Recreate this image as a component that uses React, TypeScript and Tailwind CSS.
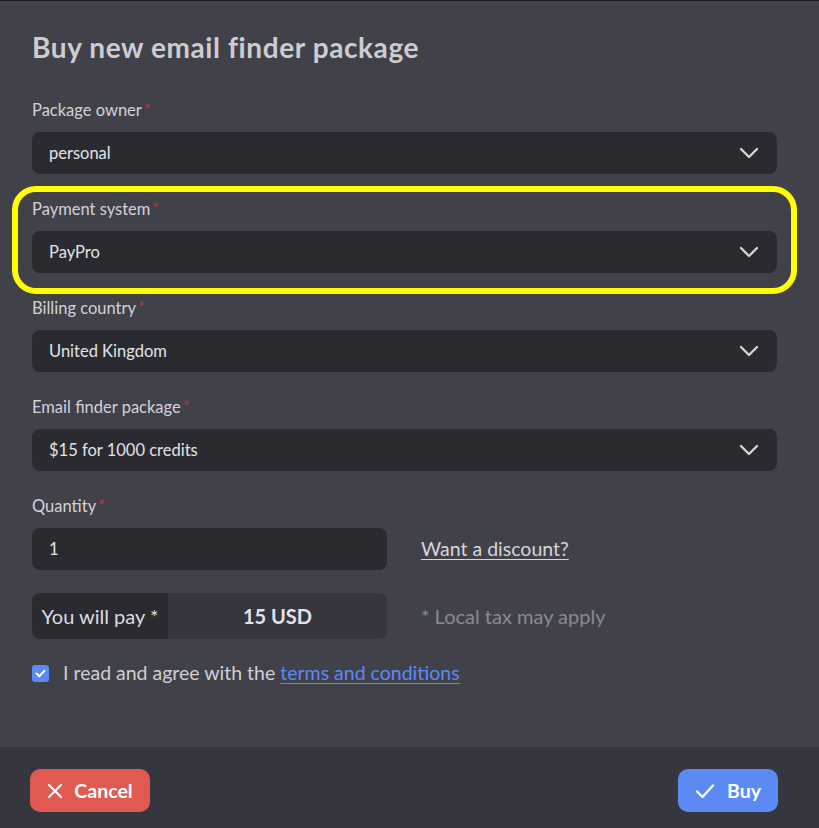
import React from "react";

const Chevron = () => (
  <svg width="20" height="12" viewBox="0 0 20 12" fill="none">
    <path d="M2 2l8 8 8-8" stroke="#d4d4d8" strokeWidth="2.4" strokeLinecap="round" strokeLinejoin="round" />
  </svg>
);

const Label = ({ text }: { text: string }) => (
  <div className="h-[22px] text-[16.5px] leading-[22px] text-[#d2d2d6]">
    {text}
    <span className="text-[#b13a3a] ml-[2px]">*</span>
  </div>
);

const Select = ({ label, value }: { label: string; value: string }) => (
  <div className="flex flex-col gap-[11px]">
    <Label text={label} />
    <div className="h-[42px] rounded-[8px] bg-[#2a2b30] flex items-center justify-between pl-[17px] pr-[18px]">
      <span className="text-[16.5px] text-[#e2e2e6]">{value}</span>
      <Chevron />
    </div>
  </div>
);

export default function App() {
  return (
    <div
      className="w-[819px] h-[828px] bg-[#41414a] border-t border-[#1c1c20] flex flex-col"
      style={{ fontFamily: "Lato, 'Open Sans', sans-serif" }}
    >
      <div className="flex-1 px-[32px] pt-[29px]">
        <h1 className="text-[28px] font-bold text-[#cdcdd1] leading-[34px] tracking-[0.6px]">Buy new email finder package</h1>
        <div className="mt-[35px] flex flex-col gap-[24px] w-[745px]">
          <Select label="Package owner" value="personal" />
          <div className="relative">
            <div className="absolute left-[-20px] right-[-20px] top-[-12px] bottom-[-21px] border-[6px] border-[#ffff00] rounded-[24px] pointer-events-none" />
            <Select label="Payment system" value="PayPro" />
          </div>
          <Select label="Billing country" value="United Kingdom" />
          <Select label="Email finder package" value="$15 for 1000 credits" />
          <div className="flex flex-col gap-[11px]">
            <Label text="Quantity" />
            <div className="flex items-center gap-[34px]">
              <div className="w-[355px] h-[42px] rounded-[8px] bg-[#2a2b30] flex items-center pl-[17px] text-[16.5px] text-[#e2e2e6]">
                1
              </div>
              <span className="text-[19.5px] text-[#d6d6da] underline underline-offset-[3px]">Want a discount?</span>
            </div>
          </div>
        </div>
        <div className="mt-[23px] flex items-center gap-[34px]">
          <div className="w-[355px] h-[46px] rounded-[8px] overflow-hidden flex">
            <div className="w-[136px] bg-[#2a2b30] flex items-center justify-center text-[20px] text-[#dcdce0]">
              You will pay *
            </div>
            <div className="flex-1 bg-[#36363e] flex items-center justify-center text-[20px] font-bold text-[#e4e4e8]">
              15 USD
            </div>
          </div>
          <span className="text-[20px] text-[#8a8a92]">* Local tax may apply</span>
        </div>
        <div className="mt-[25px] flex items-center gap-[14px] h-[18px]">
          <div className="w-[17px] h-[17px] rounded-[3px] bg-[#5b8af5] flex items-center justify-center">
            <svg width="11" height="9" viewBox="0 0 11 9" fill="none">
              <path d="M1.5 4.5l2.8 2.8L9.5 1.8" stroke="white" strokeWidth="2" strokeLinecap="round" strokeLinejoin="round" />
            </svg>
          </div>
          <span className="text-[19.5px] text-[#cfcfd3]">
            I read and agree with the{" "}
            <span className="text-[#5b8af5] underline underline-offset-[3px]">terms and conditions</span>
          </span>
        </div>
      </div>
      <div className="h-[81px] bg-[#36363f] flex items-start justify-between pt-[22px] pl-[30px] pr-[41px]">
        <button className="h-[43px] w-[120px] rounded-[10px] bg-[#e05a52] flex items-center justify-center gap-[11px] text-white font-bold text-[19.5px]">
          <svg width="16" height="16" viewBox="0 0 16 16" fill="none">
            <path d="M2 2l12 12M14 2L2 14" stroke="white" strokeWidth="2.2" strokeLinecap="round" />
          </svg>
          Cancel
        </button>
        <button className="h-[43px] w-[100px] rounded-[10px] bg-[#5b8af5] flex items-center justify-center gap-[12px] text-white font-bold text-[19.5px]">
          <svg width="20" height="16" viewBox="0 0 20 16" fill="none">
            <path d="M2 8.5l5.5 5.5L18 2.5" stroke="white" strokeWidth="2.4" strokeLinecap="round" strokeLinejoin="round" />
          </svg>
          Buy
        </button>
      </div>
    </div>
  );
}
